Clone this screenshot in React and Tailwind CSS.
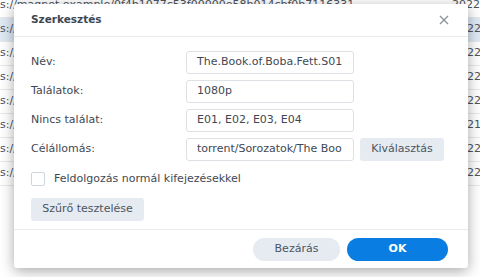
import React, { useState } from "react";

const rows = [
  { left: "s://magnet.example/0f4b1077c53f00000e58b014cbf0b7116331", right: "2022", full: true },
  { left: "s://", right: "22", active: true },
  { left: "s://", right: "22" },
  { left: "s://", right: "22" },
  { left: "s://", right: "22" },
  { left: "s://", right: "21" },
  { left: "s://", right: "22" },
  { left: "s://", right: "22" },
];

const fields = [
  { label: "Név:", value: "The.Book.of.Boba.Fett.S01" },
  { label: "Találatok:", value: "1080p" },
  { label: "Nincs találat:", value: "E01, E02, E03, E04" },
];

const App = () => {
  const [regex, setRegex] = useState(false);

  return (
    <div
      className="relative w-[480px] h-[277px] overflow-hidden bg-white text-[11px] text-[#4b535c]"
      style={{ fontFamily: '"DejaVu Sans", Verdana, sans-serif' }}
    >
      {/* background list, mostly covered by the dialog */}
      <div className="flex flex-col -mt-[6px]">
        {rows.map((r, i) => (
          <div
            key={i}
            className={`flex items-center justify-between h-[24px] border-b border-[#e6e8eb] whitespace-nowrap overflow-hidden ${
              r.active ? "bg-[#dfe9f4]" : ""
            }`}
          >
            <span className={r.full ? "" : "w-[14px] overflow-hidden"}>{r.left}</span>
            <span className={r.full ? "pl-4" : "w-[13px] overflow-hidden"}>{r.right}</span>
          </div>
        ))}
      </div>

      {/* dialog */}
      <div className="absolute left-[14px] top-[4px] w-[454px] h-[264px] bg-white rounded-[3px] shadow-[0_3px_14px_rgba(0,0,0,0.35)] flex flex-col">
        <div className="flex items-center justify-between h-[33px] px-[17px] border-b border-[#e8eaed]">
          <span className="font-bold text-[10.5px] text-[#3d4652]">Szerkesztés</span>
          <svg width="10" height="10" viewBox="0 0 10 10" className="mr-[2px]">
            <path d="M1 1L9 9M9 1L1 9" stroke="#8c939b" strokeWidth="1.4" />
          </svg>
        </div>

        <div className="flex-1 pl-[17px] pt-[14px] text-[#3f4852]">
          <div className="flex flex-col gap-[6px]">
            {fields.map((f) => (
              <div key={f.label} className="flex items-center">
                <span className="w-[155px]">{f.label}</span>
                <div className="w-[168px] h-[23px] border border-[#dde1e6] rounded-[3px] px-[10px] flex items-center overflow-hidden whitespace-nowrap">
                  {f.value}
                </div>
              </div>
            ))}
            <div className="flex items-center">
              <span className="w-[155px]">Célállomás:</span>
              <div className="w-[168px] h-[23px] border border-[#dde1e6] rounded-[3px] px-[10px] flex items-center overflow-hidden whitespace-nowrap">
                torrent/Sorozatok/The Boo
              </div>
              <button className="ml-[6px] w-[84px] h-[23px] bg-[#e6ebf1] rounded-[3px] text-[#4a5561]">
                Kiválasztás
              </button>
            </div>
          </div>

          <label className="flex items-center mt-[10px] gap-[9px] cursor-pointer">
            <span
              onClick={() => setRegex(!regex)}
              className="w-[14px] h-[14px] border border-[#cfd5dc] rounded-[2px] bg-white"
            ></span>
            <span>Feldolgozás normál kifejezésekkel</span>
          </label>

          <button className="mt-[10px] w-[113px] h-[23px] bg-[#e6ebf1] rounded-[3px] text-[#4a5561]">
            Szűrő tesztelése
          </button>
        </div>

        <div className="h-[39px] border-t border-[#e8eaed] flex items-center justify-end gap-[7px] pr-[20px]">
          <button className="w-[87px] h-[23px] rounded-full bg-[#e6ebf1] text-[#4a5561]">
            Bezárás
          </button>
          <button className="w-[101px] h-[23px] rounded-full bg-[#0a7de3] text-white font-bold">
            OK
          </button>
        </div>
      </div>
    </div>
  );
};

export default App;
